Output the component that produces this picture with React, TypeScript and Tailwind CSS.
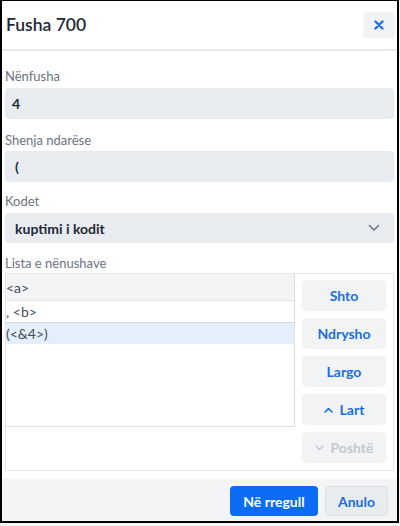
import React from "react";

const font = { fontFamily: 'Lato, "Noto Sans", sans-serif' };

function Btn({ children, disabled }: { children: React.ReactNode; disabled?: boolean }) {
  return (
    <button
      className={
        "h-[31px] w-[84px] rounded-[4px] bg-[#f1f3f5] text-[14px] font-bold flex items-center justify-center gap-[7px] " +
        (disabled ? "text-[#c3c8cf]" : "text-[#1b6ee0]")
      }
    >
      {children}
    </button>
  );
}

export default function App() {
  return (
    <div className="w-[400px] h-[526px] bg-[#f3f4f6]" style={font}>
      <div className="w-[399px] h-[523px] border-x-2 border-b-2 border-t border-black bg-white flex flex-col">
        <div className="h-[50px] shrink-0 flex items-center justify-between pl-[4px] pr-[2px] border-b-2 border-[#e6eaf0]">
          <div className="text-[17.5px] font-semibold text-[#212936]">Fusha 700</div>
          <button className="w-[32px] h-[26px] rounded-[4px] bg-[#f1f3f5] flex items-center justify-center mt-[-1px]">
            <svg width="10" height="10" viewBox="0 0 10 10">
              <path d="M1.5 1.5 L8.5 8.5 M8.5 1.5 L1.5 8.5" stroke="#1b6ee0" strokeWidth="2.4" strokeLinecap="round" />
            </svg>
          </button>
        </div>
        <div className="flex-1 px-[3px] pt-[15px] flex flex-col">
          <div className="text-[13px] text-[#6b7280] h-[20px] leading-[20px]">Nënfusha</div>
          <div className="mt-[2px] h-[31px] rounded-[4px] bg-[#e8ebef] px-[7px] flex items-center text-[14px] font-bold text-[#1f2937]">4</div>
          <div className="mt-[11px] text-[13px] text-[#6b7280] h-[20px] leading-[20px]">Shenja ndarëse</div>
          <div className="mt-[1px] h-[31px] rounded-[4px] bg-[#e8ebef] px-[10px] flex items-center text-[14px] font-bold text-[#1f2937]">(</div>
          <div className="mt-[9px] text-[13px] text-[#6b7280] h-[20px] leading-[20px]">Kodet</div>
          <div className="mt-[2px] h-[30px] rounded-[4px] bg-[#e8ebef] pl-[10px] pr-[14px] flex items-center justify-between text-[14px] font-bold text-[#1f2937]">
            <span>kuptimi i kodit</span>
            <svg width="12" height="8" viewBox="0 0 12 8">
              <path d="M1.5 1.5 L6 6 L10.5 1.5" stroke="#6b7280" strokeWidth="1.5" fill="none" strokeLinecap="round" strokeLinejoin="round" />
            </svg>
          </div>
          <div className="mt-[10px] text-[13px] text-[#6b7280] h-[20px] leading-[20px]">Lista e nënushave</div>
          <div className="h-[198px] border border-[#e3e7ec] flex">
            <div className="w-[289px] h-[153px] border-r border-b border-[#d8dee6] flex flex-col text-[14px] text-[#454c57]">
              <div className="h-[27px] bg-[#f3f4f6] border-b border-[#e2e6eb] flex items-center">&lt;a&gt;</div>
              <div className="h-[21px] flex items-center">, &lt;b&gt;</div>
              <div className="h-[22px] bg-[#e4effc] border-t border-[#c9d9ee] flex items-center">(&lt;&amp;4&gt;)</div>
            </div>
            <div className="flex-1 flex flex-col items-center pt-[6px] gap-[7px]">
              <Btn>Shto</Btn>
              <Btn>Ndrysho</Btn>
              <Btn>Largo</Btn>
              <Btn>
                <svg width="9" height="6" viewBox="0 0 9 6">
                  <path d="M1 5 L4.5 1.5 L8 5" stroke="#1b6ee0" strokeWidth="1.6" fill="none" strokeLinecap="round" strokeLinejoin="round" />
                </svg>
                Lart
              </Btn>
              <Btn disabled>
                <svg width="9" height="6" viewBox="0 0 9 6">
                  <path d="M1 1 L4.5 4.5 L8 1" stroke="#c3c8cf" strokeWidth="1.4" fill="none" strokeLinecap="round" strokeLinejoin="round" />
                </svg>
                Poshtë
              </Btn>
            </div>
          </div>
        </div>
        <div className="h-[42px] shrink-0 bg-[#f3f4f6] flex items-start justify-end gap-[7px] pr-[9px] pt-[7px]">
          <button className="h-[30px] w-[88px] rounded-[4px] bg-[#0a6cf5] text-white text-[14px] font-bold">Në rregull</button>
          <button className="h-[30px] w-[63px] rounded-[4px] bg-[#e9ecef] border border-[#dde1e6] text-[#1b6ee0] text-[14px] font-bold">Anulo</button>
        </div>
      </div>
    </div>
  );
}
